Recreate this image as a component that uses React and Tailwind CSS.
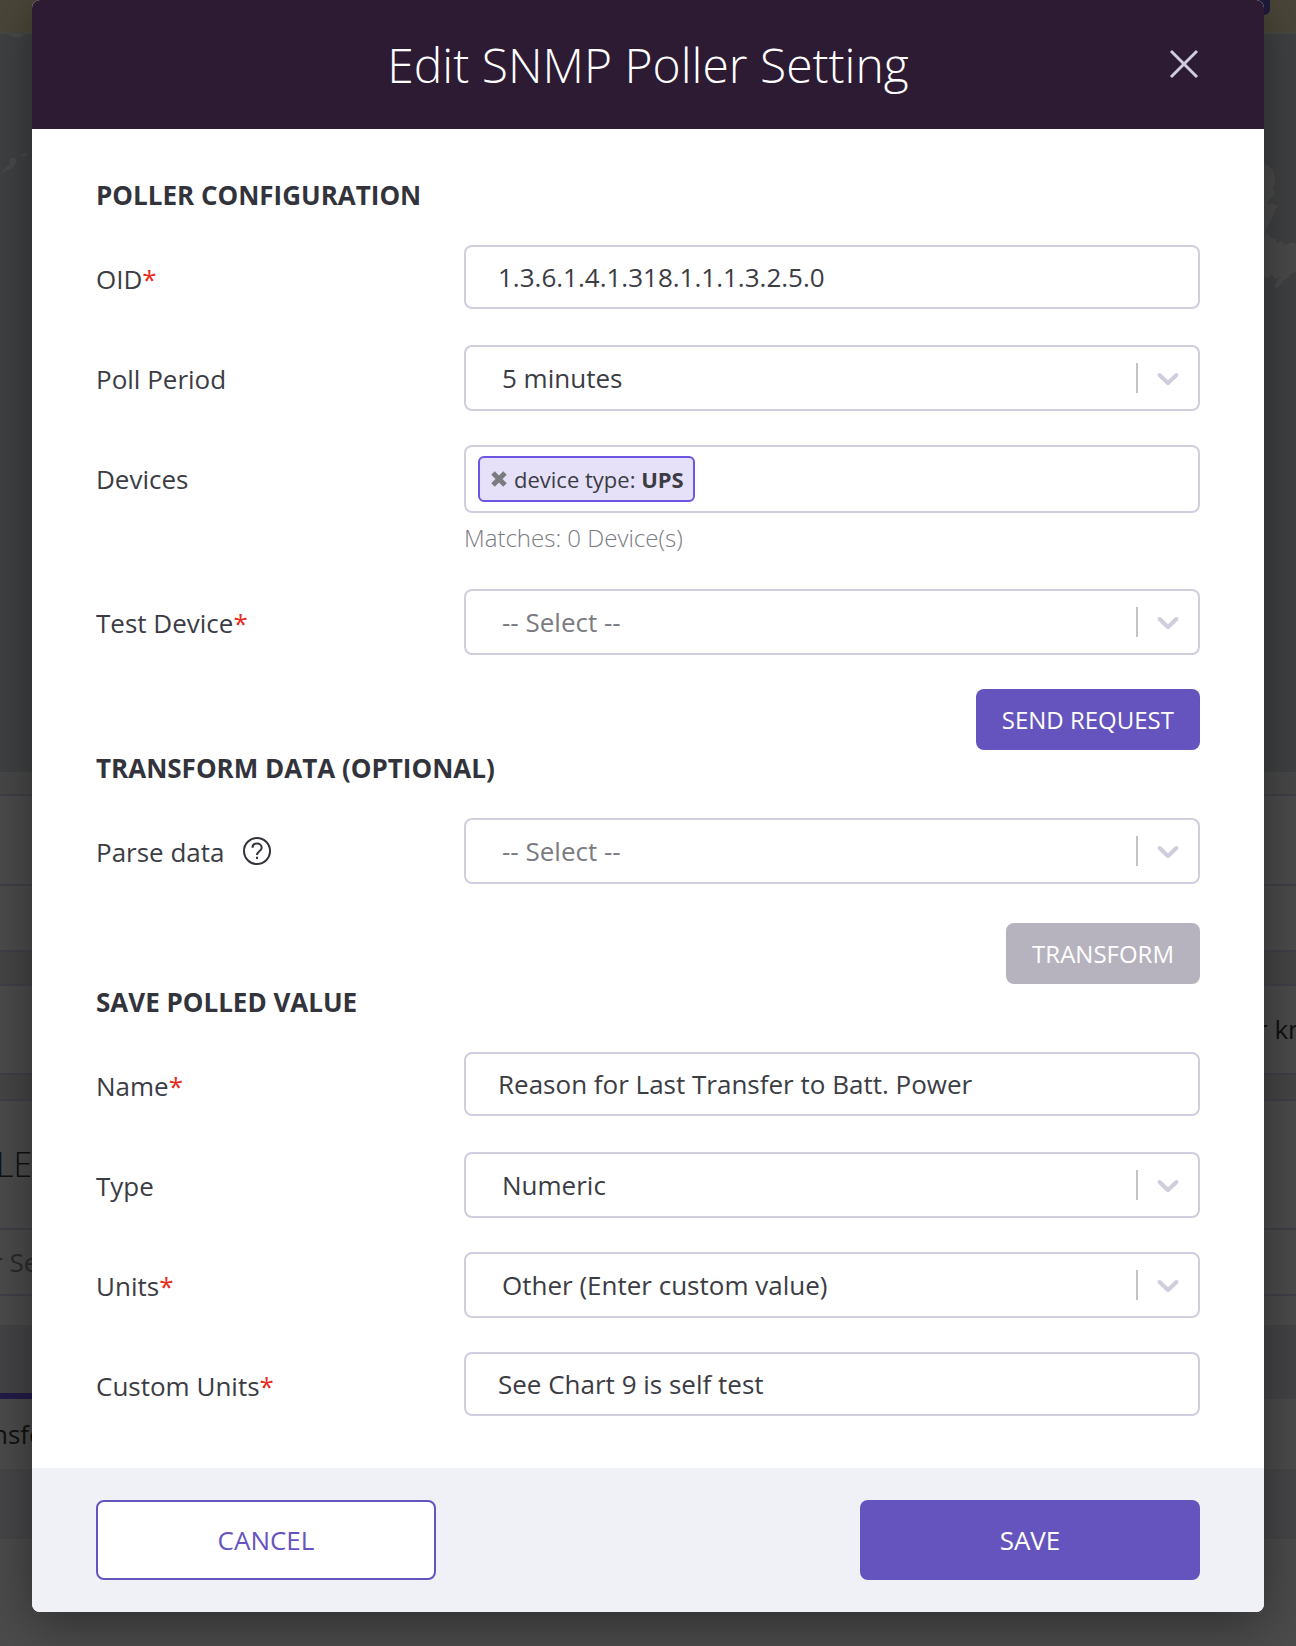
import React, { useState } from "react";

const Backdrop = () => {
  return (
    <div aria-hidden="true" className="col-start-1 row-start-1 min-w-0 overflow-hidden bg-[#4b4b4b] text-[#111111]">
      {/* Top bar */}
      <div className="flex h-8 justify-end bg-[#4a4639] pr-[26px]">
        <div className="h-[15px] w-24 rounded-b-md bg-[#1f1a3d]"></div>
      </div>

      {/* Map */}
      <div className="flex h-[740px] justify-between border-t-2 border-[#474743] bg-[#3f4142]">
        <svg width="32" height="260" viewBox="0 0 32 260" fill="#494a49">
          <path d="M8 0h18l-7 4-5-1z" />
          <path d="M0 141l6-8 4-3-1-4 4-3 4 3-3 7-8 4-5 4zM19 122l6-3 3 1-5 3z" />
        </svg>
        <svg width="32" height="260" viewBox="0 0 32 260" fill="#494a49">
          <path d="M0 130l5 2 4 4 2 6v6l-2 6 2 4-1 4-4 3-3 5 4-1 7 3-3 4-2 7-4 7-5 11 4-3 2 5 6 2v4l5-2 4 4 6-3 5 2v28l-5 2-3 4-5 3-4 6-5 1 3-7 4-4-6 2-3-4-6 4-2-4-3 3z" />
        </svg>
      </div>

      {/* Page content */}
      <div className="h-[22px] bg-[#484848]"></div>
      <div className="h-[90px] border-t-2 border-[#414047]"></div>
      <div className="h-[66px] border-t-2 border-[#414047]"></div>
      <div className="h-[34px] border-t-2 border-[#414047] bg-[#454545]"></div>
      <div className="flex h-[89px] items-center justify-end border-t-2 border-[#414047] text-[26px]">
        <div className="w-[39px] whitespace-nowrap">r kn</div>
      </div>
      <div className="h-[26px] border-t-2 border-[#414047] bg-[#454545]"></div>
      <div className="flex h-[129px] items-center border-t-2 border-[#414047] text-[34px] font-light">
        <div className="-ml-1">LE</div>
      </div>
      <div className="flex h-[66px] items-center border-t-2 border-[#414047] text-[26px] text-[#2a2a2a]">
        <div className="-ml-2 whitespace-nowrap">r Se</div>
      </div>
      <div className="h-[31px] border-t-2 border-[#414047]"></div>
      <div className="h-[74px] bg-[#444446]">
        <div className="h-[68px]"></div>
        <div className="h-[6px] w-1/2 bg-[#231c48]"></div>
      </div>
      <div className="flex h-[70px] items-center text-[26px]">
        <div className="-ml-2">nsfe</div>
      </div>
      <div className="h-[70px] bg-[#464648]"></div>
    </div>
  );
};

const SectionTitle = ({ children }) => (
  <h2 className="h-[68px] text-[26px] leading-9 font-bold text-[#32333b]">{children}</h2>
);

const Row = ({ id, label, required, help, children }) => (
  <div className="grid grid-cols-3">
    <div className="flex h-[68px] items-center text-[26px] leading-9">
      <label htmlFor={id}>
        {label}
        {required && <span className="text-[#e8291c]">*</span>}
      </label>
      {help}
    </div>
    <div className="col-span-2">{children}</div>
  </div>
);

const TextField = ({ id, label, value }) => {
  const [text, setText] = useState(value);

  return (
    <Row id={id} label={label} required>
      <input
        id={id}
        type="text"
        value={text}
        onChange={(e) => setText(e.target.value)}
        className="mb-9 block h-16 w-full rounded-lg border-2 border-[#d0cddf] bg-white px-8 text-[26px]"
      />
    </Row>
  );
};

const SelectField = ({ id, label, required, help, options, muted }) => (
  <Row id={id} label={label} required={required} help={help}>
    <div className="relative mb-[34px]">
      <select
        id={id}
        className={`block h-[66px] w-full appearance-none rounded-lg border-2 border-[#d0cddf] bg-white pr-20 pl-9 text-[26px] ${muted ? "text-[#7b7b82]" : ""}`}
      >
        {options.map((o) => (
          <option key={o}>{o}</option>
        ))}
      </select>
      <div className="pointer-events-none absolute inset-y-0 right-[14px] flex items-center gap-3">
        <span className="h-[30px] w-[2px] bg-[#c4c4c4]"></span>
        <svg width="36" height="36" viewBox="0 0 20 20" fill="#d0cddf">
          <path d="M4.516 7.548c0.436-0.446 1.043-0.481 1.576 0l3.908 3.747 3.908-3.747c0.533-0.481 1.141-0.446 1.574 0 0.436 0.445 0.408 1.197 0 1.615-0.406 0.418-4.695 4.502-4.695 4.502-0.217 0.223-0.502 0.335-0.787 0.335s-0.57-0.112-0.789-0.335c0 0-4.287-4.084-4.695-4.502s-0.436-1.17 0-1.615z" />
        </svg>
      </div>
    </div>
  </Row>
);

const HelpIcon = () => (
  <button type="button" aria-label="About parsing data" className="ml-4">
    <svg width="32" height="32" viewBox="0 0 32 32" fill="none" stroke="#32333b" strokeWidth="2">
      <circle cx="16" cy="15" r="13" />
      <path d="M11.500 11.800c0-2.500 1.800-4.300 4.500-4.300s4.700 1.700 4.700 4.200c0 3.600-4.700 3.600-4.700 7.300" />
      <path d="M16 20.800v2.200" />
    </svg>
  </button>
);

const App = () => {
  return (
    <div className="grid min-h-screen font-['Open_Sans',sans-serif] text-[#3b3c44]">
      <Backdrop />

      {/* Modal */}
      <div
        role="dialog"
        aria-labelledby="modal-title"
        className="col-start-1 row-start-1 mx-8 mb-[34px] self-start overflow-hidden rounded-lg bg-white shadow-[0_10px_50px_rgba(0,0,0,0.4)]"
      >
        <div className="grid h-[129px] grid-cols-[1fr_auto_1fr] items-center bg-[#2d1a33] px-16">
          <h1 id="modal-title" className="col-start-2 text-5xl font-light text-white">
            Edit SNMP Poller Setting
          </h1>
          <button type="button" aria-label="Close" className="justify-self-end">
            <svg width="32" height="32" viewBox="0 0 32 32" stroke="#d0cddf" strokeWidth="3">
              <path d="M3 2l26 26M29 2L3 28" />
            </svg>
          </button>
        </div>

        <form>
          <div className="px-16 pt-12 pb-4">
            <SectionTitle>POLLER CONFIGURATION</SectionTitle>
            <TextField id="oid" label="OID" value="1.3.6.1.4.1.318.1.1.1.3.2.5.0" />
            <SelectField id="period" label="Poll Period" options={["5 minutes", "10 minutes"]} />
            <Row id="devices" label="Devices">
              <div className="flex h-[68px] items-center rounded-lg border-2 border-[#d0cddf] px-3">
                <span className="flex h-[46px] items-center rounded-md border-2 border-[#6c55e0] bg-[#e6e1f9] pr-[9px] pl-[10px] text-[22px] whitespace-nowrap">
                  <button type="button" aria-label="Remove device type" className="mr-[6px]">
                    <svg width="18" height="18" viewBox="0 0 18 18" stroke="#7b7b82" strokeWidth="5">
                      <path d="M3 3l12 12M15 3L3 15" />
                    </svg>
                  </button>
                  <span>
                    device type: <b>UPS</b>
                  </span>
                </span>
                <input id="devices" type="text" className="h-full min-w-0 flex-1 px-2 text-[22px] outline-none" />
              </div>
              <p className="h-[76px] pt-[7px] text-[24px] leading-9 font-light text-[#7b7b82]">Matches: 0 Device(s)</p>
            </Row>
            <SelectField id="test-device" label="Test Device" required options={["-- Select --"]} muted />
            <div className="flex justify-end">
              <button type="button" className="h-[61px] rounded-lg bg-[#6554bd] px-[26px] text-[24px] text-white">
                SEND REQUEST
              </button>
            </div>

            <SectionTitle>TRANSFORM DATA (OPTIONAL)</SectionTitle>
            <SelectField id="parse" label="Parse data" help={<HelpIcon />} options={["-- Select --"]} muted />
            <div className="flex justify-end pt-[5px]">
              <button type="button" disabled className="h-[61px] rounded-lg bg-[#b6b3be] px-[26px] text-[24px] text-white">
                TRANSFORM
              </button>
            </div>

            <SectionTitle>SAVE POLLED VALUE</SectionTitle>
            <TextField id="name" label="Name" value="Reason for Last Transfer to Batt. Power" />
            <SelectField id="type" label="Type" options={["Numeric", "Text"]} />
            <SelectField id="units" label="Units" required options={["Other (Enter custom value)"]} />
            <TextField id="custom-units" label="Custom Units" value="See Chart 9 is self test" />
          </div>

          {/* Footer */}
          <div className="flex justify-between bg-[#f0f1f7] px-16 py-8 text-[26px]">
            <button type="button" className="h-20 w-[340px] rounded-lg border-2 border-[#6554bd] bg-white text-[#6554bd]">
              CANCEL
            </button>
            <button type="submit" className="h-20 w-[340px] rounded-lg bg-[#6554bd] text-white">
              SAVE
            </button>
          </div>
        </form>
      </div>
    </div>
  );
};

export default App;
